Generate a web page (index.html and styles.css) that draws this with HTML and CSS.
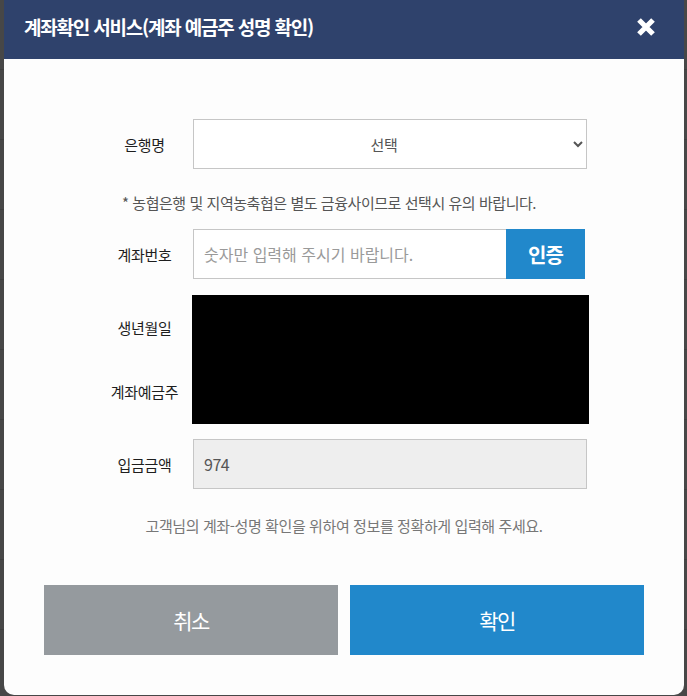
FILE: index.html
```html
<!DOCTYPE html>
<html lang="ko">
<head>
<meta charset="utf-8">
<title>계좌확인 서비스</title>
<link rel="stylesheet" href="styles.css">
</head>
<body>
<div class="backdrop">
  <div class="modal">
    <div class="modal-header">
      <h1 class="modal-title">계좌확인 서비스(계좌 예금주 성명 확인)</h1>
      <button class="close-btn" type="button" aria-label="닫기">
        <svg width="20" height="20" viewBox="0 0 20 20"><path d="M3 3 L17 17 M17 3 L3 17" stroke="#fff" stroke-width="5.2" stroke-linecap="butt" fill="none"/></svg>
      </button>
    </div>
    <div class="modal-body">
      <div class="form">
        <div class="row">
          <label class="label">은행명</label>
          <select class="field select"><option>선택</option></select>
        </div>
        <p class="notice">* 농협은행 및 지역농축협은 별도 금융사이므로 선택시 유의 바랍니다.</p>
        <div class="row">
          <label class="label">계좌번호</label>
          <div class="field account">
            <input class="account-input" type="text" placeholder="숫자만 입력해 주시기 바랍니다.">
            <button class="verify-btn" type="button">인증</button>
          </div>
        </div>
        <div class="row redacted-row">
          <div class="label-stack">
            <span class="label">생년월일</span>
            <span class="label">계좌예금주</span>
          </div>
          <div class="redacted"></div>
        </div>
        <div class="row">
          <label class="label">입금금액</label>
          <input class="field amount" type="text" value="974" readonly>
        </div>
      </div>
      <p class="info">고객님의 계좌-성명 확인을 위하여 정보를 정확하게 입력해 주세요.</p>
      <div class="actions">
        <button class="btn btn-cancel" type="button">취소</button>
        <button class="btn btn-ok" type="button">확인</button>
      </div>
    </div>
  </div>
</div>
</body>
</html>
```
FILE: styles.css
```css
* { box-sizing: border-box; }
html, body {
  margin: 0;
  padding: 0;
  height: 696px;
  overflow: hidden;
}
body {
  background: #474747;
  font-family: "Noto Sans CJK KR", "Noto Sans", sans-serif;
  color: #222;
}
.backdrop {
  padding-left: 4px;
  height: 696px;
  background:
    repeating-linear-gradient(to bottom, transparent 0, transparent 69px, #3f3f3f 69px, #3f3f3f 70px);
}
.modal {
  width: 680px;
  height: 695px;
  background: #fdfdfd;
  border-radius: 0 0 10px 10px;
  overflow: hidden;
}
.modal-header {
  height: 59px;
  background: #2f426c;
  display: flex;
  align-items: center;
  justify-content: space-between;
  padding: 0 28px 0 20px;
}
.modal-title {
  margin: 0;
  color: #fff;
  font-size: 19px;
  font-weight: 700;
  letter-spacing: -1.2px;
  line-height: 1;
  padding-bottom: 6px;
}
.close-btn {
  border: 0;
  background: none;
  padding: 0;
  width: 20px;
  height: 20px;
  margin-bottom: 6px;
  cursor: pointer;
}
.close-btn svg { display: block; }
.modal-body {
  padding: 60px 40px 40px;
}
.form {
  margin-left: 52px;
  width: 493px;
}
.row {
  display: flex;
  align-items: center;
  height: 50px;
}
.label {
  width: 97px;
  flex: none;
  text-align: center;
  font-size: 15px;
  letter-spacing: -0.3px;
  color: #1e1e1e;
}
.field {
  height: 50px;
  border: 1px solid #c6c6c6;
  background: #fff;
  font-family: inherit;
}
.select {
  width: 394px;
  font-size: 15px;
  color: #555;
  text-align: center;
  text-align-last: center;
  letter-spacing: -0.3px;
  border-radius: 0;
  padding: 0 4px;
  outline: none;
}
.notice {
  margin: 0;
  padding: 24px 0 16px 26px;
  line-height: 20px;
  font-size: 15px;
  letter-spacing: -0.45px;
  color: #555;
}
.account {
  width: 392px;
  display: flex;
  border: 0;
  background: none;
}
.account-input {
  flex: 1;
  height: 50px;
  border: 1px solid #c6c6c6;
  border-right: 0;
  padding: 0 10px;
  font-family: inherit;
  font-size: 16px;
  letter-spacing: 0;
  color: #333;
  outline: none;
}
.account-input::placeholder { color: #9a9a9a; }
.verify-btn {
  width: 79px;
  height: 50px;
  border: 0;
  background: #2188cb;
  color: #fff;
  font-family: inherit;
  font-size: 20px;
  font-weight: 700;
  letter-spacing: -1px;
  padding: 0;
}
.redacted-row {
  height: 129px;
  margin-top: 16px;
  align-items: stretch;
}
.label-stack {
  width: 97px;
  display: flex;
  flex-direction: column;
}
.label-stack .label {
  flex: 1;
  display: flex;
  align-items: center;
  justify-content: center;
}
.redacted {
  width: 397px;
  background: #000;
  margin-left: -1px;
}
.row + .row:last-child { margin-top: 15px; }
.amount {
  width: 394px;
  background: #eeeeee;
  padding: 0 10px;
  font-size: 16px;
  color: #555;
  letter-spacing: -0.5px;
  outline: none;
}
.info {
  margin: 0;
  padding-top: 27px;
  line-height: 20px;
  text-align: center;
  font-size: 15px;
  letter-spacing: -0.4px;
  color: #777;
}
.actions {
  margin-top: 49px;
  display: flex;
  gap: 12px;
}
.btn {
  flex: 1;
  height: 70px;
  border: 0;
  color: #fff;
  font-family: inherit;
  font-size: 21px;
  letter-spacing: -1.5px;
  cursor: pointer;
}
.btn-cancel { background: #959a9e; }
.btn-ok { background: #2188cb; }
```
